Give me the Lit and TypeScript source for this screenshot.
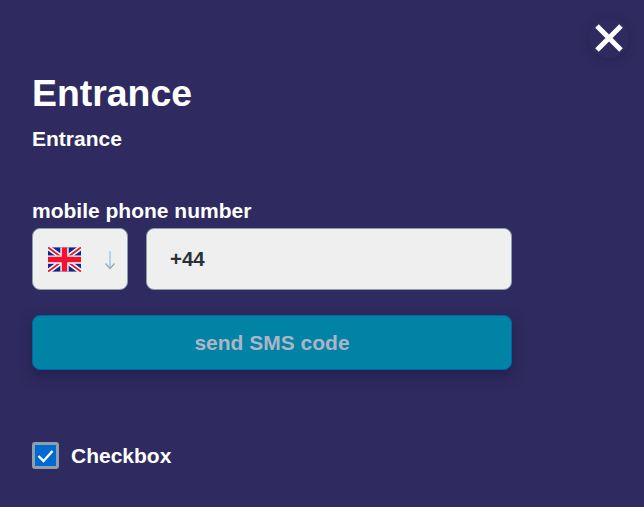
import { LitElement, html, css } from "lit";
import { customElement } from "lit/decorators.js";

@customElement("app-root")
export class AppRoot extends LitElement {
  static styles = css`
    :host {
      display: block;
      height: 507px;
      background: #2f2b60;
      font-family: "Liberation Sans", Arial, sans-serif;
      color: #fff;
      position: relative;
      overflow: hidden;
    }
    .close {
      position: absolute;
      left: 589px;
      top: 18px;
      width: 40px;
      height: 40px;
      border-radius: 50%;
      background: #2f2b60;
      box-shadow: 0 2px 8px rgba(30, 27, 70, 0.5);
      display: flex;
      align-items: center;
      justify-content: center;
    }
    .content {
      width: 480px;
      padding: 71px 0 0 32px;
      display: flex;
      flex-direction: column;
    }
    h1 {
      margin: 0;
      font-size: 37.4px;
      line-height: 44px;
      font-weight: 700;
    }
    .sub {
      margin-top: 12px;
      font-size: 21px;
      line-height: 23px;
      font-weight: 700;
    }
    .label {
      margin-top: 49px;
      font-size: 21px;
      line-height: 23px;
      font-weight: 700;
    }
    .row {
      margin-top: 6px;
      display: flex;
      gap: 18px;
    }
    .select, .phone {
      box-sizing: border-box;
      height: 62px;
      background: #efefef;
      border: 1px solid #8d9ca8;
      border-radius: 8px;
      display: flex;
      align-items: center;
    }
    .select {
      width: 96px;
      padding-left: 15px;
      gap: 23px;
    }
    .arrow { display: block; margin-top: 2px; }
    .phone {
      flex: 1;
      padding-left: 23px;
      font-size: 20.5px;
      font-weight: 700;
      color: #263238;
    }
    .send {
      box-sizing: border-box;
      margin-top: 25px;
      height: 55px;
      background: #0083a5;
      border: 1px solid #0264a8;
      border-radius: 8px;
      box-shadow: 0 6px 14px rgba(25, 22, 60, 0.55);
      display: flex;
      align-items: center;
      justify-content: center;
      font-size: 21px;
      font-weight: 700;
      color: #adb5c6;
    }
    .check {
      margin-top: 72px;
      display: flex;
      align-items: center;
      gap: 12px;
      font-size: 21px;
      font-weight: 700;
    }
    .box {
      box-sizing: border-box;
      width: 27px;
      height: 27px;
      background: #0069d2;
      border: 3px solid #8e9fac;
      border-radius: 3px;
      display: flex;
      align-items: center;
      justify-content: center;
    }
  `;

  render() {
    return html`
      <div class="close">
        <svg width="30" height="30" viewBox="0 0 30 30">
          <path d="M3 3 L27 27 M27 3 L3 27" stroke="#fff" stroke-width="5" fill="none"></path>
        </svg>
      </div>
      <div class="content">
        <h1>Entrance</h1>
        <div class="sub">Entrance</div>
        <div class="label">mobile phone number</div>
        <div class="row">
          <div class="select">
            <svg width="33" height="25" viewBox="0 0 60 44">
              <rect width="60" height="44" fill="#0a2a8c"></rect>
              <path d="M0 0 L60 44 M60 0 L0 44" stroke="#fff" stroke-width="9"></path>
              <path d="M0 0 L60 44 M60 0 L0 44" stroke="#f5102f" stroke-width="3.5"></path>
              <path d="M30 0 V44 M0 22 H60" stroke="#fff" stroke-width="15"></path>
              <path d="M30 0 V44 M0 22 H60" stroke="#f5102f" stroke-width="10"></path>
            </svg>
            <svg class="arrow" width="12" height="20" viewBox="0 0 12 20">
              <path d="M6 1 V18" stroke="#9ccbe8" stroke-width="1.5" fill="none"></path>
              <path d="M1.5 13.5 L6 18.5 L10.5 13.5" stroke="#8fa6b3" stroke-width="1.2" fill="none"></path>
            </svg>
          </div>
          <div class="phone">+44</div>
        </div>
        <div class="send">send SMS code</div>
        <div class="check">
          <div class="box">
            <svg width="17" height="14" viewBox="0 0 17 14">
              <path d="M1.5 7 L6.5 12 L15.5 2" stroke="#fff" stroke-width="2.4" fill="none"></path>
            </svg>
          </div>
          <span>Checkbox</span>
        </div>
      </div>
    `;
  }
}
